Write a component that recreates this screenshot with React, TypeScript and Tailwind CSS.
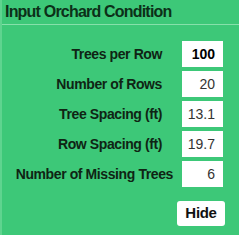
const rows = [
  { label: 'Trees per Row', value: '100', bold: true },
  { label: 'Number of Rows', value: '20' },
  { label: 'Tree Spacing (ft)', value: '13.1' },
  { label: 'Row Spacing (ft)', value: '19.7' },
  { label: 'Number of Missing Trees', value: '6', wide: true },
];

export default function App() {
  return (
    <div
      className="w-[239px] h-[235px] bg-[#3dc878] border-l-2 border-[#5fd48f] overflow-hidden"
      style={{ fontFamily: '"Liberation Sans", Arial, sans-serif' }}
    >
      {/* header */}
      <div className="h-[25px] border-b border-[#86e0aa] pl-[3px] pt-[3px]">
        <h1 className="text-[16px] leading-[18px] font-bold tracking-[-0.8px] text-[#0c3018]">
          Input Orchard Condition
        </h1>
      </div>

      <div className="flex flex-col gap-[4px] pt-[16px] pr-[16px]">
        {rows.map((row) => (
          <div key={row.label} className="flex items-center justify-end">
            <span
              className={`text-[14px] font-bold tracking-[-0.4px] text-[#0f2414] ${
                row.wide ? 'mr-[9px]' : 'mr-[20px]'
              }`}
            >
              {row.label}
            </span>
            <div
              className={`w-[41px] h-[26px] bg-white flex items-center justify-end pr-[8px] text-[14px] ${
                row.bold ? 'font-bold text-black' : 'text-[#333]'
              }`}
            >
              {row.value}
            </div>
          </div>
        ))}
      </div>

      <div className="flex justify-end pr-[14px] mt-[14px]">
        <button className="w-[48px] h-[25px] bg-white rounded-[3px] text-[15px] font-bold text-[#111] tracking-[-0.3px]">
          Hide
        </button>
      </div>
    </div>
  );
}
